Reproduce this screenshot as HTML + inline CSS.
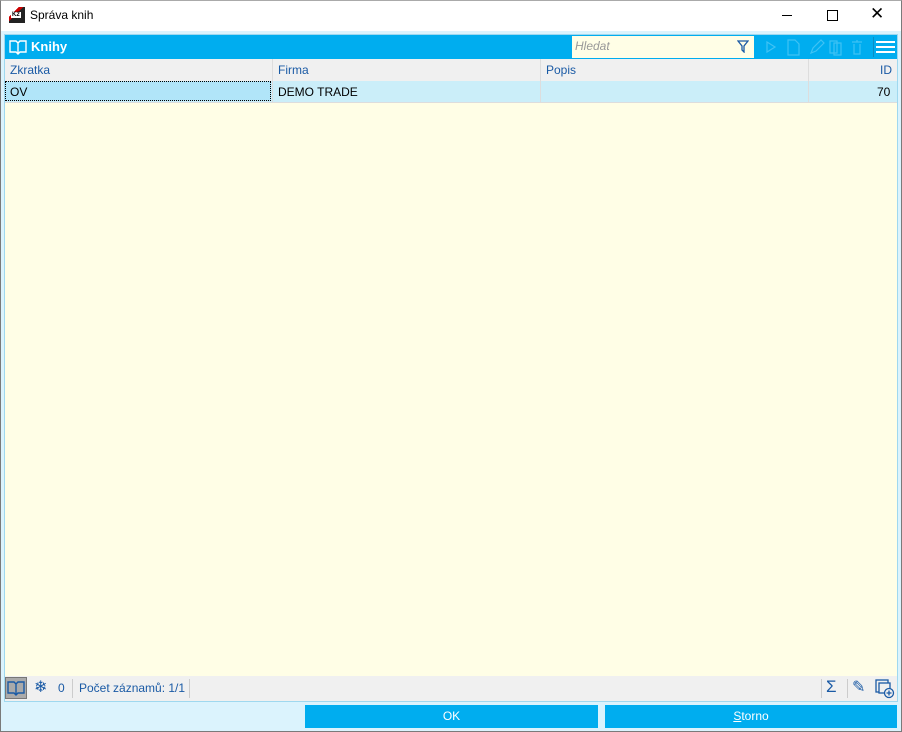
<!DOCTYPE html><html><head><style>
body{margin:0;width:902px;height:732px;position:relative;overflow:hidden;font-family:"Segoe UI","Liberation Sans",sans-serif;background:#dbf3fd}
.a{position:absolute}
.win{left:0;top:0;width:900px;height:730px;border:1px solid #7a7a7a;border-top-color:#aaa}
.t{font-size:12px}
</style></head><body>
<div class="a win"></div>
<div class="a" style="left:1px;top:1px;width:900px;height:30px;background:#fff"></div>
<div class="a" style="left:9px;top:7px;width:16px;height:16px;background:linear-gradient(135deg,#fff 30%,#c00 30%,#c00 45%,#222 45%)"></div>
<div class="a" style="left:11px;top:12px;font-size:6px;font-weight:bold;background:#fff;padding:0 1px;">K2</div>
<div class="a t" style="left:30px;top:8px;color:#000">Správa knih</div>
<div class="a" style="left:782px;top:15px;width:10px;height:1px;background:#000"></div>
<div class="a" style="left:827px;top:10px;width:9px;height:9px;border:1px solid #000"></div>
<div class="a" style="left:870px;top:4px;font-size:17px;color:#000">✕</div>
<div class="a" style="left:4px;top:34px;width:894px;height:668px;background:#fffee6;border:1px solid #9fd8ef;box-sizing:border-box"></div>
<div class="a" style="left:5px;top:35px;width:892px;height:24px;background:#00adef"></div>
<svg class="a" style="left:9px;top:39px" width="18" height="16" viewBox="0 0 18 16" fill="none" stroke="#fff" stroke-width="1.4"><path d="M1 2h6l2 2 2-2h6v11h-6l-2 2-2-2H1z M9 4v11"/></svg>
<div class="a" style="left:31px;top:39px;color:#fff;font-weight:bold;font-size:13px">Knihy</div>
<div class="a" style="left:572px;top:36px;width:182px;height:22px;background:#fffee6"></div>
<div class="a" style="left:575px;top:39px;color:#999;font-style:italic;font-size:12px">Hledat</div>
<svg class="a" style="left:737px;top:40px" width="12" height="13"><path d="M1 1h10L7 6v6L5 10V6z" fill="none" stroke="#1a5aa5" stroke-width="1.3"/></svg>
<svg class="a" style="left:764px;top:38px" width="108" height="18" fill="none" stroke="#3fc2f4" stroke-width="1.2"><path d="M3 4l8 5-8 5z"/><path d="M24 2h7l4 4v11H24z"/><path d="M47 15l2-5 8-8 3 3-8 8z"/><rect x="66" y="3" width="7" height="12"/><rect x="70" y="5" width="7" height="12"/><path d="M88 4h10M90 6v10h6V6M93 2v2"/></svg>
<div class="a" style="left:873px;top:37px;width:1px;height:20px;background:#0a8ec4"></div>
<div class="a" style="left:876px;top:41px;width:19px;height:2px;background:#fff;box-shadow:0 5px 0 #fff,0 10px 0 #fff"></div>
<div class="a" style="left:5px;top:59px;width:892px;height:22px;background:#f0f0f0;border-bottom:1px solid #ddd"></div>
<div class="a t" style="left:10px;top:63px;color:#1a5aa5">Zkratka</div>
<div class="a t" style="left:278px;top:63px;color:#1a5aa5">Firma</div>
<div class="a t" style="left:546px;top:63px;color:#1a5aa5">Popis</div>
<div class="a t" style="left:880px;top:63px;color:#1a5aa5">ID</div>
<div class="a" style="left:5px;top:81px;width:892px;height:21px;background:#cbeef9;border-bottom:1px solid #ddd"></div>
<div class="a" style="left:5px;top:81px;width:266px;height:20px;background:#b1e5f9;border:1px dotted #000;box-sizing:border-box"></div>
<div class="a" style="left:272px;top:59px;width:1px;height:43px;background:#ddd"></div>
<div class="a" style="left:540px;top:59px;width:1px;height:43px;background:#ddd"></div>
<div class="a" style="left:808px;top:59px;width:1px;height:43px;background:#ddd"></div>
<div class="a t" style="left:10px;top:85px;color:#000">OV</div>
<div class="a t" style="left:278px;top:85px;color:#000">DEMO TRADE</div>
<div class="a t" style="left:877px;top:85px;color:#000">70</div>
<div class="a" style="left:5px;top:676px;width:892px;height:25px;background:#f0f0f0"></div>
<div class="a" style="left:5px;top:677px;width:22px;height:22px;background:#aaa;border:1px solid #777;box-sizing:border-box"></div>
<svg class="a" style="left:7px;top:680px" width="18" height="16" viewBox="0 0 18 16" fill="none" stroke="#1a5aa5" stroke-width="1.4"><path d="M1 2h6l2 2 2-2h6v11h-6l-2 2-2-2H1z M9 4v11"/></svg>
<div class="a" style="left:34px;top:677px;color:#1a5aa5;font-size:16px">❄</div>
<div class="a t" style="left:58px;top:681px;color:#1a5aa5">0</div>
<div class="a" style="left:72px;top:679px;width:1px;height:19px;background:#ccc"></div>
<div class="a t" style="left:79px;top:681px;color:#1a5aa5">Počet záznamů: 1/1</div>
<div class="a" style="left:189px;top:679px;width:1px;height:19px;background:#ccc"></div>
<div class="a" style="left:821px;top:679px;width:1px;height:19px;background:#ccc"></div>
<div class="a" style="left:826px;top:677px;color:#1a5aa5;font-size:17px">Σ</div>
<div class="a" style="left:847px;top:679px;width:1px;height:19px;background:#ccc"></div>
<div class="a" style="left:852px;top:677px;color:#1a5aa5;font-size:16px">✎</div>
<svg class="a" style="left:875px;top:679px" width="20" height="20" fill="none" stroke="#1a5aa5" stroke-width="1.3"><rect x="1" y="1" width="12" height="12"/><rect x="4" y="4" width="11" height="10" fill="#f0f0f0"/><circle cx="14" cy="14" r="4.5" fill="#f0f0f0"/><path d="M14 11.5v5M11.5 14h5"/></svg>
<div class="a t" style="left:305px;top:705px;width:293px;height:23px;background:#00adef;color:#fff;text-align:center;line-height:23px">OK</div>
<div class="a t" style="left:605px;top:705px;width:292px;height:23px;background:#00adef;color:#fff;text-align:center;line-height:23px"><u>S</u>torno</div>
</body></html>
